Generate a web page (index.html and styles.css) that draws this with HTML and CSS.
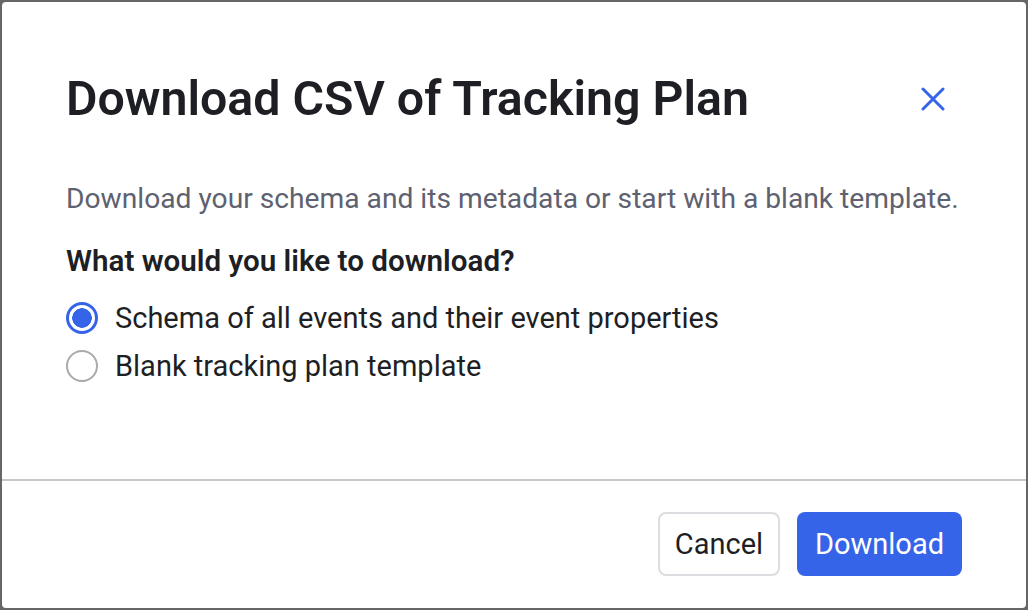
FILE: index.html
```html
<!DOCTYPE html>
<html lang="en">
<head>
<meta charset="utf-8">
<title>Download CSV of Tracking Plan</title>
<link rel="stylesheet" href="styles.css">
</head>
<body>
<div class="modal" role="dialog" aria-labelledby="title">
  <div class="content">
    <div class="header">
      <h1 id="title" class="title">Download CSV of Tracking Plan</h1>
      <button class="close" aria-label="Close">
        <svg width="24" height="24" viewBox="0 0 24 24"><path d="M2 2 L22 22 M22 2 L2 22" stroke="#3564e8" stroke-width="3" stroke-linecap="round" fill="none"/></svg>
      </button>
    </div>
    <p class="desc">Download your schema and its metadata or start with a blank template.</p>
    <p class="question">What would you like to download?</p>
    <label class="option"><input type="radio" name="dl" class="radio" checked><span>Schema of all events and their event properties</span></label>
    <label class="option"><input type="radio" name="dl" class="radio"><span>Blank tracking plan template</span></label>
  </div>
  <div class="footer">
    <button class="btn btn-secondary">Cancel</button>
    <button class="btn btn-primary">Download</button>
  </div>
</div>
</body>
</html>
```

FILE: styles.css
```css
* { box-sizing: border-box; }
html, body { margin: 0; padding: 0; }
body {
  background: #666667;
  width: 1028px;
  height: 610px;
  padding: 2px;
  font-family: Roboto, "Liberation Sans", sans-serif;
  color: #1e1f24;
}
.modal {
  background: #fff;
  width: 1024px;
  height: 606px;
  border-radius: 4px;
  display: flex;
  flex-direction: column;
}
.content {
  flex: 1;
  padding: 67px 64px 0 64px;
}
.header {
  display: flex;
  align-items: center;
  justify-content: space-between;
  height: 60px;
}
.title {
  margin: 0;
  font-size: 48.3px;
  line-height: 60px;
  font-weight: 600;
  color: #1e1f24;
}
.close {
  width: 58px;
  height: 58px;
  border: 0;
  background: transparent;
  padding: 0;
  display: flex;
  align-items: center;
  justify-content: center;
}
.desc {
  margin: 50px 0 0;
  font-size: 28.2px;
  line-height: 40px;
  color: #5e6170;
  white-space: nowrap;
}
.question {
  margin: 22px 0 0;
  font-size: 29.6px;
  line-height: 40px;
  font-weight: 600;
}
.option {
  display: flex;
  align-items: center;
  gap: 17px;
  height: 48px;
  font-size: 29px;
}
.question + .option { margin-top: 13px; }
.radio {
  appearance: none;
  -webkit-appearance: none;
  margin: 0;
  width: 32px;
  height: 32px;
  border-radius: 50%;
  border: 2px solid #a9a9ae;
  background: #fff;
  flex: none;
}
.radio:checked {
  border: 3px solid #3564e8;
  background: radial-gradient(circle, #3564e8 0 9.5px, #fff 10px);
}
.footer {
  border-top: 2px solid #c8c8cc;
  padding: 31px 64px 32px;
  display: flex;
  justify-content: flex-end;
  gap: 17px;
}
.btn {
  height: 64px;
  border-radius: 8px;
  font-family: inherit;
  font-size: 29px;
  padding: 0;
}
.btn-secondary {
  width: 122px;
  background: #fff;
  border: 2px solid #dcdde1;
  color: #1e1f24;
}
.btn-primary {
  width: 165px;
  background: #3564e8;
  border: 0;
  color: #fff;
}
```
